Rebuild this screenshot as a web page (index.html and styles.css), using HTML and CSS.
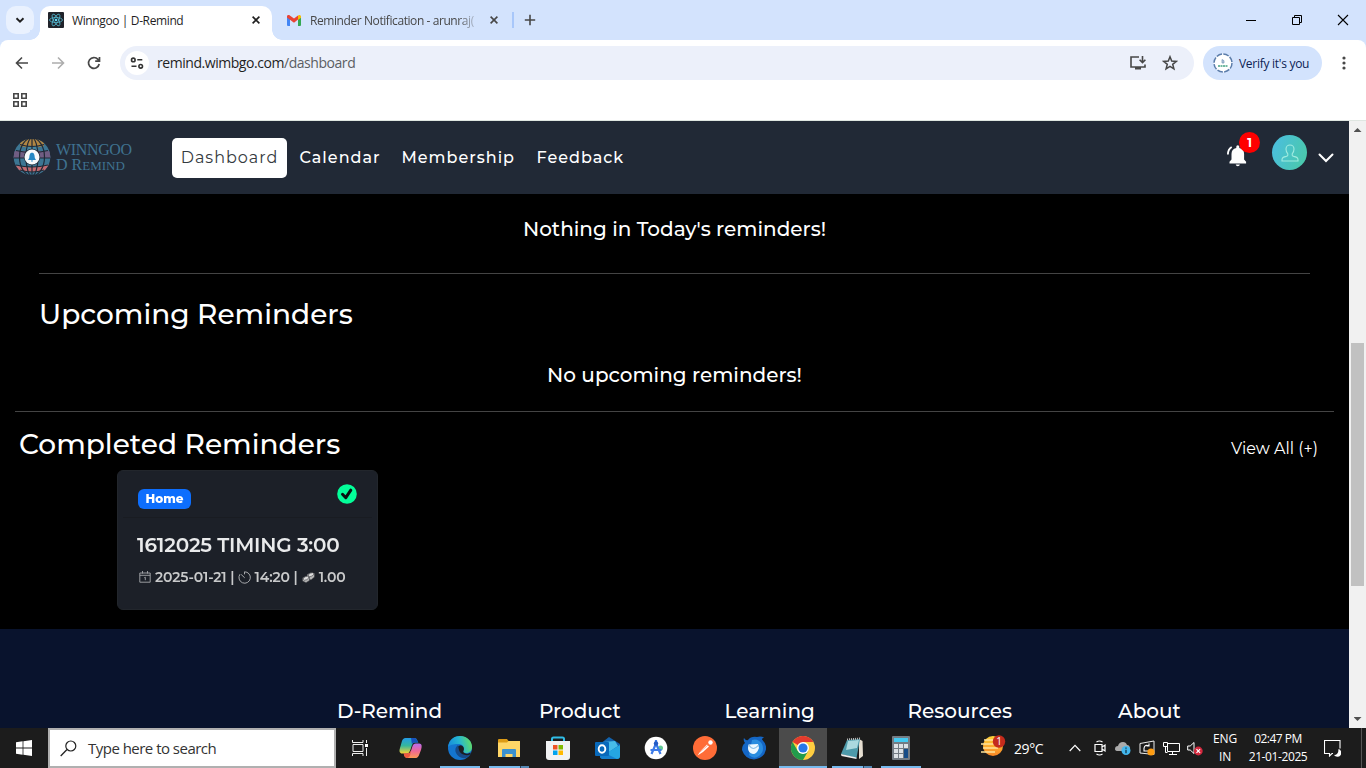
FILE: index.html
```html
<!DOCTYPE html>
<html lang="en">
<head>
<meta charset="utf-8">
<title>Winngoo | D-Remind</title>
<link rel="stylesheet" href="styles.css">
</head>
<body>
<div class="screen">
  <header class="tabstrip">
    <div class="tab-menu"><svg width="28" height="28" viewBox="0 0 28 28"><path d="M10.5 12.3l3.5 3.4 3.5-3.4" fill="none" stroke="#1f1f1f" stroke-width="1.9"/></svg></div>
    <div class="tab active">
      <svg class="favicon" width="16" height="16" viewBox="0 0 16 16"><rect width="16" height="16" rx="1" fill="#20232a"/><g fill="none" stroke="#53b9d1" stroke-width=".8"><ellipse cx="8" cy="8" rx="6.5" ry="2.5"/><ellipse cx="8" cy="8" rx="6.5" ry="2.5" transform="rotate(60 8 8)"/><ellipse cx="8" cy="8" rx="6.5" ry="2.5" transform="rotate(120 8 8)"/></g><circle cx="8" cy="8" r="1.3" fill="#61dafb"/></svg>
      <span class="tab-title first-title">Winngoo | D-Remind</span>
      <svg class="tab-close" width="8" height="8" viewBox="0 0 8 8"><path d="M.6.6l6.8 6.8M7.4.6L.6 7.4" stroke="#1f1f1f" stroke-width="1.6"/></svg>
    </div>
    <div class="tab idle">
      <svg class="gmail" width="14" height="11" viewBox="0 0 14 11"><path d="M0 1.5h3V11H1a1 1 0 0 1-1-1z" fill="#4285f4"/><path d="M11 1.5h3V10a1 1 0 0 1-1 1h-2z" fill="#34a853"/><path d="M0 1.5C0 0 1.7-.4 2.8.4L7 3.6 11 .5V4.6L7 7.7 0 2.6z" fill="#ea4335"/><path d="M11 .6C12.300-.5 14 .2 14 1.600v1.200l-3 2.200z" fill="#fbbc04"/></svg>
      <span class="tab-title second-title">Reminder Notification - arunraj(</span>
      <svg class="tab-close2" width="8" height="8" viewBox="0 0 8 8"><path d="M.6.6l6.8 6.8M7.4.6L.6 7.4" stroke="#474747" stroke-width="1.600"/></svg>
    </div>
    <i class="tab-divider"></i>
    <svg class="new-tab" width="12" height="12" viewBox="0 0 12 12"><path d="M6 .8v10.400M.8 6h10.400" stroke="#474747" stroke-width="1.600"/></svg>
    <div class="window-buttons">
      <svg width="12" height="12" viewBox="0 0 12 12"><path d="M1 6.500h10" stroke="#000"/></svg>
      <svg width="12" height="12" viewBox="0 0 12 12"><path d="M1.500 3.500h7v7h-7zM3.500 3.500v-2h7v7h-2" fill="none" stroke="#000"/></svg>
      <svg width="12" height="12" viewBox="0 0 12 12"><path d="M1 1l10 10M11 1L1 11" stroke="#000" stroke-width="1.100"/></svg>
    </div>
  </header>
  <div class="browser-bars">
    <div class="toolbar">
      <svg class="nav-icon" width="14" height="14" viewBox="0 0 14 14"><path d="M13 7H1.800M7 1.500L1.500 7 7 12.500" fill="none" stroke="#474747" stroke-width="1.600"/></svg>
      <svg class="nav-icon" width="14" height="14" viewBox="0 0 14 14"><path d="M1 7h11.200M7 1.500L12.500 7 7 12.500" fill="none" stroke="#adadad" stroke-width="1.600"/></svg>
      <svg class="nav-icon" width="14" height="14" viewBox="0 0 14 14"><path d="M12.200 8A5.400 5.400 0 1 1 11 3.400L12.500 5M12.500 1v4.200H8.200" fill="none" stroke="#474747" stroke-width="1.700"/></svg>
      <div class="omnibox">
        <span class="site-info"><svg width="14" height="12" viewBox="0 0 14 12"><g fill="none" stroke="#333" stroke-width="1.600"><circle cx="3.300" cy="2.900" r="1.800"/><circle cx="10.700" cy="9.300" r="1.800"/><path d="M7.300 2.800h5M1.500 9.300h5"/></g></svg></span>
        <span class="url">remind.wimbgo.com<span class="path">/dashboard</span></span>
        <svg class="install" width="18" height="16" viewBox="0 0 18 16"><path d="M10 2H2v10h14V9.500" fill="none" stroke="#474747" stroke-width="1.600"/><path d="M6 12h6v2.500H6z" fill="#474747"/><path d="M13.500 1v6M10.600 4.700l2.900 2.900 2.900-2.900" fill="none" stroke="#474747" stroke-width="1.600"/></svg>
        <svg class="star" width="16" height="16" viewBox="0 0 16 16"><path d="M8 1.800l1.700 4.300 4.600.3-3.600 2.900 1.200 4.500L8 11.300l-3.900 2.500 1.200-4.500-3.600-2.900 4.600-.3z" fill="none" stroke="#474747" stroke-width="1.500"/></svg>
      </div>
      <div class="profile">
        <svg width="20" height="20" viewBox="0 0 20 20"><circle cx="10" cy="10" r="9.500" fill="#fff"/><circle cx="10" cy="10" r="9" fill="none" stroke="#5b7dab" stroke-width="1.500" stroke-dasharray="5.800 1.270"/><path d="M9 6.500l2 1.200v2.300H9z" fill="#b5c6d9" stroke="#7495b9" stroke-width=".7"/><path d="M5 13h10" stroke="#73baa2" stroke-width="1.800" stroke-dasharray="2 .5"/></svg>
        <span>Verify it's you</span>
      </div>
      <svg class="kebab" width="4" height="14" viewBox="0 0 4 14"><g fill="#474747"><circle cx="2" cy="2" r="1.600"/><circle cx="2" cy="7" r="1.600"/><circle cx="2" cy="12" r="1.600"/></g></svg>
    </div>
    <div class="bookmarks"><svg width="14" height="14" viewBox="0 0 14 14"><path d="M.8.8h4.400v4.400H.8zM8.800.8h4.400v4.400H8.800zM.8 8.800h4.400v4.400H.8zM8.800 8.800h4.400v4.400H8.800z" fill="none" stroke="#474747" stroke-width="1.600"/></svg></div>
  </div>
  <div class="viewport">
    <div class="page">
      <nav class="site-nav">
        <div class="brand">
          <svg width="38" height="38" viewBox="0 0 38 38"><defs><clipPath id="globe"><circle cx="19" cy="19" r="18.300"/></clipPath></defs><g clip-path="url(#globe)"><path d="M0 0h38v38H0z" fill="#3d7693"/><path d="M7 1h24v7q-12 3-24 0z" fill="#b18643"/><path d="M0 13h38v7H0z" fill="#705d83"/><path d="M13 8h12v6H13z" fill="#4585a0"/><path d="M0 27q19 5 38-1v5q-19 6-38 0z" fill="#c26a70"/></g><g fill="none" stroke="#202936" stroke-width="1.200"><path d="M19 0v38M1 20h36M3 12.500q16 4 32 0M7 6.500q12 4 24 0M3 27q16 4 32 0M7 32q12 4 24 0"/><ellipse cx="19" cy="19" rx="6" ry="19"/><ellipse cx="19" cy="19" rx="12.500" ry="19"/></g><circle cx="19" cy="19" r="8.200" fill="#202936"/><circle cx="19" cy="19" r="7.500" fill="#f7fafc"/><path d="M15 22q1.500-1 1.500-4.500 0-2.500 2.500-3 2.500.5 2.500 3 0 3.500 1.500 4.500zM17.800 22.500h2.400L19 24z" fill="#2588c5"/></svg>
          <div class="brand-name"><span class="brand-top">WINNGOO</span><span class="brand-bottom">D R<small>EMIND</small></span></div>
        </div>
        <a class="nav-link current">Dashboard</a>
        <a class="nav-link calendar">Calendar</a>
        <a class="nav-link membership">Membership</a>
        <a class="nav-link feedback">Feedback</a>
        <div class="bell"><svg width="22" height="22" viewBox="0 0 22 22"><path d="M2.500 18.500v-1.700l2-2.300V9q0-5 4.800-6V1.800a1.500 1.500 0 0 1 3 0V3q4.800 1 4.800 6v5.500l2 2.300v1.700zM8.700 19.500h4.200q-.3 1.800-2.100 1.800t-2.100-1.800z" fill="#fff"/><path d="M.9 9.400q0-5 3.800-7.400" fill="none" stroke="#fff" stroke-width="1.800"/></svg><b>1</b></div>
        <div class="avatar"><svg width="18" height="18" viewBox="0 0 18 18"><path d="M6.800 11.300v-1.500Q5 8 5 5a4 4 0 0 1 8 0q0 3-1.800 4.800v1.500q0 .8 1.500 1.100 4.300.7 4.300 3.300V17H1v-1.300q0-2.600 4.300-3.300 1.500-.3 1.500-1.100z" fill="none" stroke="#a0ebe0" stroke-width="1.100"/></svg></div>
        <svg class="chevron" width="16" height="10" viewBox="0 0 16 10"><path d="M1.500 1.500L8 8l6.500-6.500" fill="none" stroke="#fff" stroke-width="2" stroke-linecap="round"/></svg>
      </nav>
      <main>
        <section class="today"><p class="empty nothing">Nothing in Today's reminders!</p></section>
        <section class="upcoming"><h2>Upcoming Reminders</h2><p class="empty none">No upcoming reminders!</p></section>
        <section class="completed">
          <div class="completed-head"><h2>Completed Reminders</h2><a>View All (+)</a></div>
          <article class="card">
            <div class="card-head"><span class="tag">Home</span><svg width="20" height="20" viewBox="0 0 20 20"><circle cx="10" cy="10" r="9.800" fill="#03fe99"/><path d="M5.500 10.300l3.300 3.400 5-7.500" fill="none" stroke="#09120f" stroke-width="3" stroke-linecap="round" stroke-linejoin="round"/></svg></div>
            <h3>1612025 TIMING 3:00</h3>
            <div class="meta">
              <svg class="m-cal" width="12" height="12" viewBox="0 0 12 12"><path d="M.8 2h10.400v9.200H.8zM.8 4.300h10.400M3.500 0v2.500M8.500 0v2.500M5.300 6.700l1-.5v3" fill="none" stroke="#a6a8ab" stroke-width=".9"/></svg><span class="date">2025-01-21 |</span>
              <svg class="m-clock" width="13" height="13" viewBox="0 0 13 13"><path d="M6.500 3.300V.8A5.700 5.700 0 1 1 2 3.200M3.200 3.500l3.500 3.300" fill="none" stroke="#a6a8ab"/></svg><span class="time">14:20 |</span>
              <svg class="m-coins" width="13" height="11" viewBox="0 0 13 11"><g fill="#b4b4b4" stroke="#303238" stroke-width=".5"><path d="M5 2.500L9 .5l3.500 1v3.500L9 8 5 6z"/><ellipse cx="9" cy="2.700" rx="3" ry="1.600" transform="rotate(-25 9 2.700)" fill="#ddd"/><path d="M.5 6L4 4l3.500.8V8.500L4 10.700.5 9z"/><ellipse cx="4" cy="6.200" rx="3" ry="1.600" transform="rotate(-25 4 6.200)" fill="#ddd"/></g></svg><span class="cost">1.00</span>
            </div>
          </article>
        </section>
      </main>
      <footer><b class="f1">D-Remind</b><b class="f2">Product</b><b class="f3">Learning</b><b class="f4">Resources</b><b class="f5">About</b></footer>
    </div>
    <aside class="scrollbar"><i class="up"></i><i class="thumb"></i><i class="down"></i></aside>
  </div>
  <div class="taskbar">
    <div class="start"><svg width="16" height="16" viewBox="0 0 16 16"><path d="M0 2.200L6.600 1.300v6.300H0zM7.400 1.200L16 0v7.600H7.400zM0 8.400h6.600v6.300L0 13.800zM7.400 8.400H16V16l-8.600-1.200z" fill="#fff"/></svg></div>
    <div class="search"><svg width="17" height="17" viewBox="0 0 17 17"><circle cx="10.800" cy="6" r="5" fill="none" stroke="#222" stroke-width="1.200"/><path d="M7 9.500L.7 16" stroke="#222" stroke-width="1.300"/></svg><span>Type here to search</span></div>
    <div class="task-view"><svg width="17" height="16" viewBox="0 0 17 16"><path d="M.5 0v2.500h10.500V0M.5 16v-2.500h10.500V16M1 4.500h10v7H1zM14.500 0v3M14.500 8v8" fill="none" stroke="#eee"/><path d="M13 4h3v3h-3z" fill="#fff"/></svg></div>
    <div class="apps">
      <div class="app copilot"><svg width="24" height="22" viewBox="0 0 26 24"><defs><linearGradient id="ca" x2="0" y2="1"><stop stop-color="#239be8"/><stop offset=".5" stop-color="#35b79c"/><stop offset="1" stop-color="#f8d435"/></linearGradient><linearGradient id="cb" x2="0" y2="1"><stop stop-color="#b66df0"/><stop offset=".5" stop-color="#ef6797"/><stop offset="1" stop-color="#ff9a53"/></linearGradient></defs><path d="M7 1h10q2 0 3 3l1 2h-4q-2 0-3 3l-2 6q-1 3-4 3H4q-5 0-3-6l2-7q1-4 4-4z" fill="url(#ca)"/><path d="M13 1h4q2 0 3 3l1 2h-4q-2 0-3 2z" fill="#1752bc"/><path d="M18 7h4q4 0 2 7l-2 5q-1 4-5 4H9q-3 0-4-5h4q3 0 4-3l2-6q1-2 3-2z" fill="url(#cb)"/><path d="M5 18h4q3 0 4-3l-1 5q-1 3-3 3-3 0-4-5z" fill="#ef593e"/></svg></div>
      <div class="app edge run"><svg width="24" height="24" viewBox="0 0 24 24"><defs><linearGradient id="ea" x1="0" y1=".6" x2="1" y2=".4"><stop stop-color="#1689dc"/><stop offset=".5" stop-color="#25b6d2"/><stop offset="1" stop-color="#62dd64"/></linearGradient></defs><circle cx="12" cy="12" r="12" fill="#1475cf"/><path d="M0 11C1 3 7 0 12 0c8 0 12 6 12 11 0 4-3 6-6 6-3 0-4-1-3-2 2-3 0-7-4-7-4 0-8 0-11 3z" fill="url(#ea)"/><path d="M10 9q-4 3-2 8 3 6 10 5 3-1 5-5-3 2-7 1-6-2-5-7z" fill="#174a88"/><path d="M10.500 10q3-2 5 1 1 2 0 4-1 1 1 2 3 1.500 6.500-.5l-1 2q-4 1.500-8-.5-4-3-3.500-8z" fill="#1c1d20"/></svg></div>
      <div class="app explorer multi"><svg width="22" height="19" viewBox="0 0 22 19"><path d="M0 1q0-1 1-1h8l1.500 2H22v4H0z" fill="#dd9b16"/><path d="M0 3.500h9L10.500 2H22v16H0z" fill="#ffd667"/><path d="M4 18v-7q0-1 1-1h12q1 0 1 1v7h-3.500v-3h-7v3z" fill="#3a91cf"/></svg></div>
      <div class="app store"><svg width="24" height="24" viewBox="0 0 24 24"><path d="M6 6V3q0-1.500 1.500-1.500h9Q18 1.500 18 3v3" fill="none" stroke="#30bde7" stroke-width="2"/><path d="M0 5h24v16q0 3-3 3H3q-3 0-3-3z" fill="#f1f2f3"/><path d="M7 9h4.500v4.500H7z" fill="#ee5425"/><path d="M12.500 9H17v4.500h-4.500z" fill="#80ba01"/><path d="M7 14.500h4.500V19H7z" fill="#00a4ef"/><path d="M12.500 14.500H17V19h-4.500z" fill="#ffb900"/></svg></div>
      <div class="app outlook"><svg width="25" height="23" viewBox="0 0 25 23"><path d="M5 7L14 0l11 7v12q0 3-3 3H8q-3 0-3-3z" fill="#1262ac"/><path d="M8 5l12-1 3 5-9 6-6-3z" fill="#47bce9"/><path d="M25 8v11q0 3-3 3H8l-3-2z" fill="#25a6e2"/><path d="M6 14l16 8H8q-3 0-3-3z" fill="#147fce"/><rect y="5" width="14" height="14" rx="1" fill="#0869bb"/><ellipse cx="7" cy="12" rx="3.300" ry="3.700" fill="none" stroke="#fff" stroke-width="1.900"/></svg></div>
      <div class="app studio"><svg width="24" height="24" viewBox="0 0 24 24"><circle cx="12" cy="12" r="11.300" fill="#fff"/><circle cx="16.500" cy="12" r="2.500" fill="#64c994"/><path d="M12 7.500L7.500 18M12 7.500L16.500 18M6.500 14h11M12 4v3" fill="none" stroke="#3d7be8" stroke-width="2.200"/><circle cx="12" cy="7.500" r="2.200" fill="#245bc4"/></svg></div>
      <div class="app postman"><svg width="24" height="24" viewBox="0 0 24 24"><circle cx="12" cy="12" r="12" fill="#ff6c37"/><circle cx="17.500" cy="6.500" r="2.200" fill="#fff"/><path d="M4.500 19.500l3.500-5 6-6 2 2-6 5.500z" fill="#fff"/><path d="M7 16l8-7" stroke="#ff9673" stroke-width=".8"/></svg></div>
      <div class="app mail"><svg width="24" height="24" viewBox="0 0 24 24"><path d="M3 7Q1 4 2 2q2 3 4 2 3-4 9-3 4-1 7 .5-2 .5-2 2 5 5 4 10-2 9-12 10Q3 23 0 14q0-5 3-7z" fill="#1466c5"/><path d="M10 4q6-2 10 4 3 7-3 12-5 4-10-1z" fill="#298de0"/><path d="M6.500 8.500L16 8l1 4q-2 6-6 6-5-1-5-6z" fill="#eff9ff"/><path d="M7 9q4 7 9.500 0" fill="none" stroke="#91c4e9" stroke-width="1.200"/></svg></div>
      <div class="app chrome run"><svg width="24" height="24" viewBox="0 0 24 24"><circle cx="12" cy="12" r="12" fill="#ffcd40"/><path d="M12 12L1.600 6A12 12 0 0 1 22.400 6H12z" fill="#e33b2e"/><path d="M1.600 6L6.800 15 12 18l5.200-3L12 24A12 12 0 0 1 1.600 6z" fill="#229b4c"/><circle cx="12" cy="12" r="6" fill="#fff"/><circle cx="12" cy="12" r="4.600" fill="#2878e8"/></svg></div>
      <div class="app notepad multi"><svg width="23" height="23" viewBox="0 0 23 23"><path d="M18 2l3.500 2 .5 15-4 3z" fill="#e7dfd2"/><path d="M6 3l13-1-3.500 19L0 17z" fill="#4d9aaa"/><path d="M7 4l11-1-2 8-11 2z" fill="#abd9df"/><path d="M0 17l15.500 3.500v1.500L.5 19z" fill="#eee"/><path d="M6 2.500l13-1" stroke="#bbb" stroke-width="2" stroke-dasharray="1 1"/></svg></div>
      <div class="app calc run"><svg width="18" height="24" viewBox="0 0 18 24"><rect width="18" height="24" rx="1" fill="#747c84"/><path d="M2 2h14v4H2z" fill="#45c9f0"/><path d="M2 8h4v4H2zM7 8h4v4H7zM12 8h4v4h-4zM2 13h4v4H2zM7 13h4v4H7zM2 18h4v4H2zM7 18h4v4H7z" fill="#dde2e6"/><path d="M12 13h4v9h-4z" fill="#174c87"/></svg></div>
    </div>
    <div class="tray">
      <svg class="weather" width="25" height="22" viewBox="0 0 25 22"><defs><linearGradient id="sun" x2="0" y2="1"><stop stop-color="#ffd339"/><stop offset="1" stop-color="#f98626"/></linearGradient></defs><circle cx="12" cy="11" r="10" fill="url(#sun)"/><path d="M3 5h12M0 9h15M2 13h15M0 17h14" stroke="#ffe49a" stroke-width="1.600"/><circle cx="18" cy="6.500" r="6.200" fill="#c42b1c"/><text x="18" y="10" text-anchor="middle" class="svg-badge">1</text></svg>
      <span class="temp">29°C</span>
      <svg class="up-caret" width="12" height="8" viewBox="0 0 12 8"><path d="M.7 7L6 1.300 11.300 7" fill="none" stroke="#fff" stroke-width="1.200"/></svg>
      <svg class="camera" width="12" height="16" viewBox="0 0 12 16"><path d="M2.500 2Q5.500 0 8.500 2M2.500 14Q5.500 16 8.500 14M1 4.500h7v7H1zM8 7l3-2v6L8 9" fill="none" stroke="#fff" stroke-width="1.200"/></svg>
      <svg class="cloud" width="16" height="14" viewBox="0 0 16 14"><path d="M0 8q0-3 3-3 1-4 5-4 3 0 4 3 3 0 3 4 0 2-3 2H3q-3 0-3-2z" fill="#aaa"/><circle cx="11" cy="9.500" r="4.500" fill="#43b7ee"/><path d="M11 8.700v3.500M11 6.500v1.200" stroke="#12384b" stroke-width="1.300"/></svg>
      <svg class="sync" width="16" height="16" viewBox="0 0 16 16"><path d="M1 3.500L15 1v13.500L1 13z" fill="none" stroke="#eee"/><path d="M5 8q1-4 5-2M10 3.500V6H7.500M5 8v3h5" fill="none" stroke="#fff" stroke-width="1.100"/><circle cx="12" cy="12" r="3.600" fill="#ff9d12"/></svg>
      <svg class="network" width="17" height="15" viewBox="0 0 17 15"><path d="M4.500 2.500h12v8h-12zM9.500 10.500v3M6 13.500h8M.5 1.500h4v4h-4zM2.500 5.500v6h2" fill="none" stroke="#fff"/></svg>
      <svg class="sound" width="16" height="15" viewBox="0 0 16 15"><path d="M.7 5h2.500L7 1.500v11L3.200 9H.7z" fill="none" stroke="#fff"/><circle cx="11.300" cy="10" r="4.400" fill="#d4293e"/><path d="M9.500 8.200l3.600 3.600M13.100 8.200l-3.600 3.600" stroke="#fff" stroke-width="1.200"/></svg>
      <div class="lang"><span class="eng">ENG</span><span>IN</span></div>
      <div class="clock"><span class="now">02:47 PM</span><span class="today-date">21-01-2025</span></div>
      <svg class="note" width="17" height="17" viewBox="0 0 17 17"><path d="M9 13.500H8L5.500 16v-2.500h-5v-13h15.500v8" fill="none" stroke="#fff" stroke-width="1.100"/><path d="M14.500 9a4 4 0 1 1-4.500 6q4.500 0 4.500-6z" fill="#fff"/></svg>
      <i class="show-desktop"></i>
    </div>
  </div>
</div>
</body>
</html>
```

FILE: styles.css
```css
*{box-sizing:border-box}
body{margin:0;overflow:hidden}
svg{display:block;flex:none}
.screen{width:1366px;height:768px;display:flex;flex-direction:column;background:#d3e3fd;font-family:"Open Sans","Noto Sans",sans-serif;white-space:nowrap}
.tabstrip{height:40px;background:#d3e3fd;display:flex;align-items:center;flex:none}
.tab-menu{width:28px;height:28px;margin-left:6px;border-radius:10px;background:#e9f1fe}
.tab{display:flex;align-items:center}
.tab.active{position:relative;align-self:flex-end;width:232px;height:34px;margin-left:6px;padding-left:8px;padding-bottom:6px;border-radius:10px 10px 0 0;background:#fff}
.tab.active::before,.tab.active::after{content:"";position:absolute;bottom:0;width:10px;height:10px}
.tab.active::before{left:-10px;background:radial-gradient(circle at 0 0,#d3e3fd 9.500px,#fff 10px)}
.tab.active::after{right:-10px;background:radial-gradient(circle at 100% 0,#d3e3fd 9.500px,#fff 10px)}
.tab-title{font-size:12px;color:#1f1f1f;letter-spacing:-.38px}
.first-title{width:180px;margin-left:8px}
.idle{width:240px;padding-left:15px}
.second-title{width:168px;margin-left:9px;color:#474747;letter-spacing:-.42px;-webkit-mask-image:linear-gradient(90deg,#000 148px,transparent 170px)}
.tab-close2{margin-left:12px}
.tab-divider{width:2px;height:16px;background:#a8c7fa}
.new-tab{margin-left:10px}
.window-buttons{display:flex;gap:34px;margin-left:auto;margin-right:17px}
.browser-bars{height:81px;flex:none;border-radius:8px 8px 0 0;background:#fff;border-bottom:1px solid #dfe6e1}
.toolbar{height:46px;display:flex;align-items:center;padding-left:15px}
.nav-icon{margin-right:22px}
.omnibox{width:1074px;height:34px;border-radius:17px;background:#ecf0fa;display:flex;align-items:center;margin-left:-3px;padding-left:5px}
.site-info{width:24px;height:24px;border-radius:50%;background:#fff;display:flex;align-items:center;justify-content:center}
.url{font-size:14px;color:#1f1f1f;margin-left:8px;margin-top:-1px;letter-spacing:-.45px}
.path{color:#5b5e63}
.install{margin-left:auto}
.star{margin-left:15px;margin-right:16px}
.profile{width:119px;height:34px;border-radius:17px;background:#d3e3fd;display:flex;align-items:center;padding-left:10px;margin-left:9px;font-size:12px;color:#0b2253;letter-spacing:-.28px}
.profile span{margin-left:6px}
.kebab{margin-left:20px}
.bookmarks{padding:7px 13px}
.viewport{height:607px;display:flex;flex:none}
.page{width:1349px;background:#000;color:#fff;font-family:Montserrat,Inter,sans-serif;font-weight:500;display:flex;flex-direction:column}
.site-nav{height:73px;flex:none;background:#212936;display:flex;align-items:center;font-size:16px}
.brand{width:172px;display:flex;padding-left:13px;margin-top:-1px}
.brand-name{display:flex;flex-direction:column;margin-left:5px;font-family:"Liberation Serif",serif;color:#3f7290;font-size:16px;line-height:15px;padding-top:4px;font-weight:400}
.brand-top{letter-spacing:-.35px}
.brand-bottom small{font-size:13px}
.nav-link{letter-spacing:1px}
.nav-link.current{width:115px;height:40px;border-radius:5px;background:#fff;color:#343a40;line-height:40px;text-align:center;font-weight:400}
.calendar{width:102px;margin-left:12.5px}
.membership{width:135px}
.bell{position:relative;margin-left:auto;margin-top:-3px}
.bell b{position:absolute;left:12px;top:-13px;width:21px;height:21px;border-radius:50%;background:#f00;font-size:12px;line-height:21px;text-align:center}
.avatar{width:35px;height:35px;margin:-10px 0 0 23px;border-radius:50%;background:linear-gradient(110deg,#4bbde2,#4acaa5);display:flex;align-items:center;justify-content:center}
.chevron{margin:0 15px 0 11px}
main{height:435px;flex:none}
p,h2,h3{margin:0;font-weight:500}
.empty{text-align:center;font-size:20px;line-height:30px}
.today{height:80px;margin:0 39px;padding-top:20px;border-bottom:1px solid #444}
h2{font-size:28px;line-height:34px}
.upcoming{height:138px;margin:0 15px;padding-top:23px;border-bottom:1px solid #444}
.upcoming h2{padding-left:24px}
.upcoming .empty{margin-top:29px}
.completed{padding:15px 31px 0 19px}
.completed-head{height:43px;display:flex;justify-content:space-between}
.completed-head a{font-size:16px;line-height:44px;font-weight:400}
.card{width:261px;height:140px;margin-left:98px;border-radius:6px;background:#1c2028;border:1px solid #22262c;filter:blur(.35px)}
.card-head{height:47px;margin:0 5px;padding:13px 15px 0 15px;display:flex;justify-content:space-between;border-bottom:1px solid #191c22}
.tag{width:53px;height:20px;margin-top:5px;border-radius:6px;background:#0d6efd;font-size:12px;line-height:20px;text-align:center;font-weight:800}
.card h3{font-size:20px;line-height:24px;padding:15px 0 0 19px;color:#e9eaeb;font-weight:600;letter-spacing:-.19px}
.meta{display:flex;align-items:center;padding:11px 0 0 21px;font-size:14px;line-height:18px;color:#c8c9ca;font-weight:600;letter-spacing:-.12px}
.date{margin-left:4px}
.m-clock,.m-coins{margin-left:4px}
.time{margin-left:3px}
.cost{margin-left:4px}
footer{flex:1;background:#09132d;display:flex;padding:70px 0 0 337px;font-size:20px;line-height:24px}
footer b{font-weight:500}
.f1{width:202px}.f2{width:185.500px}.f3{width:183px}.f4{width:210.500px}
.scrollbar{width:17px;background:#f1f1f1;display:flex;flex-direction:column;align-items:center}
.up,.down{width:8px;height:4px;background:#505050}
.up{margin-top:7px;clip-path:polygon(50% 0,100% 100%,0 100%)}
.down{margin-top:auto;margin-bottom:7px;clip-path:polygon(0 0,100% 0,50% 100%)}
.thumb{width:13px;height:243px;margin-top:211px;background:#c1c1c1}
.taskbar{height:40px;background:#1c1c1c;display:flex;color:#fff}
.start{width:48px;display:flex;align-items:center;justify-content:center}
.search{width:288px;border:2px solid #b0b0b0;background:#fff;color:#333;display:flex;align-items:center;padding-left:10px;font-size:15px;letter-spacing:-.52px}
.search span{margin-left:11px}
.task-view{width:48px;display:flex;align-items:center;justify-content:center}
.apps{display:flex;gap:1px;margin-left:3px}
.app{width:48px;height:40px;display:flex;align-items:center;justify-content:center}
.run,.multi{background:linear-gradient(#76b9ed,#76b9ed) 50% 100%/40px 2px no-repeat}
.multi{background:linear-gradient(90deg,#76b9ed 31px,#294057 31px,#294057 32px,#5488b4 32px) 50% 100%/40px 2px no-repeat}
.chrome{background:linear-gradient(#76b9ed,#76b9ed) 0 100%/48px 2px no-repeat,#4b4b4b}
.tray{flex:1;display:flex;align-items:center;font-size:12px}
.weather{margin-left:56px;margin-top:-4px}
.svg-badge{font:10px "Open Sans",sans-serif;fill:#fff}
.temp{width:47px;margin-left:8px;font-size:14px;letter-spacing:-.4px}
.up-caret{margin-left:8px}
.camera{margin-left:13px}.cloud{margin-left:9px}.sync{margin-left:8px}.network{margin-left:8px}.sound{margin-left:7px}
.lang,.clock{display:flex;flex-direction:column;align-items:center;line-height:18px;letter-spacing:-.4px}
.lang{width:28px;margin-left:8px;letter-spacing:-.2px}
.clock{width:64px;margin-left:7px}
.now{letter-spacing:-.5px}
.note{margin-left:14px}
.show-desktop{width:1px;height:40px;background:#555;margin-left:auto;margin-right:4px}
```
